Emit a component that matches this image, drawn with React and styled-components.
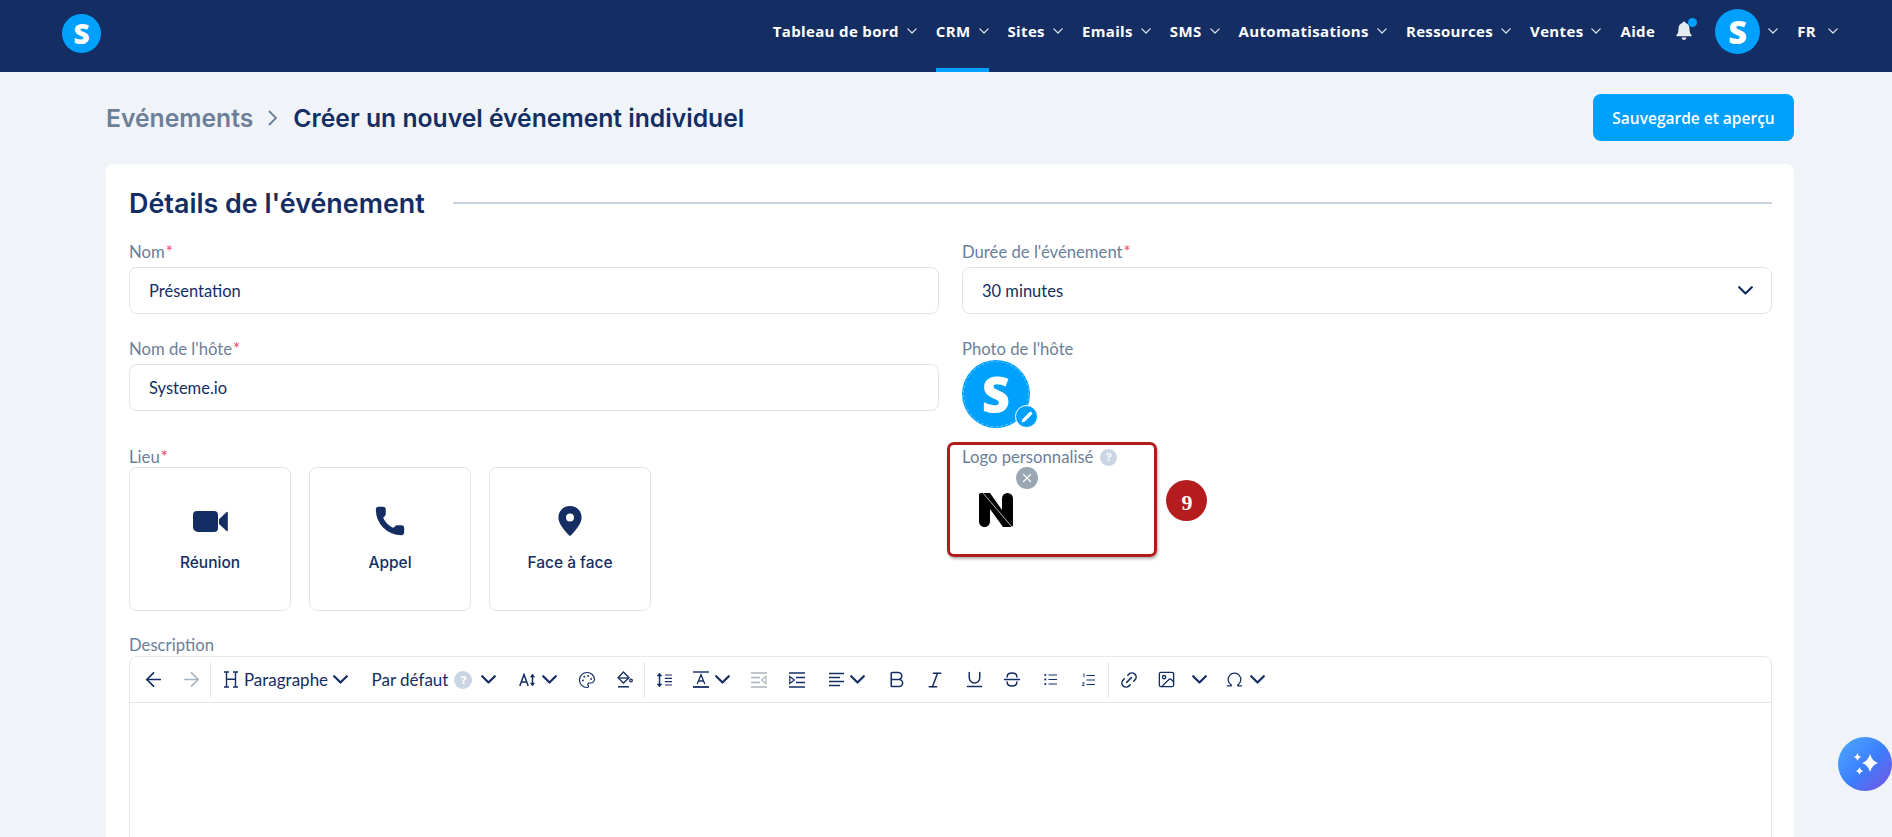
import React from "react";
import styled, { createGlobalStyle } from "styled-components";
import {
  ArrowLeft,
  ArrowRight,
  Bold,
  Image,
  Italic,
  Link2,
  Omega,
  Palette,
  Phone,
  Pencil,
  Underline,
  X,
} from "lucide-react";

const NAVY = "#142e63";
const BLUE = "#00a0ff";

const GlobalStyle = createGlobalStyle`
  html, body {
    margin: 0;
    height: 837px;
    overflow: hidden;
    background: #f0f4f9;
    font-family: "Lato", "Liberation Sans", sans-serif;
  }
  * { box-sizing: border-box; }
`;

const Page = styled.div`
  height: 837px;
  overflow: hidden;
  position: relative;
`;

const Header = styled.header`
  height: 72px;
  background: ${NAVY};
  display: flex;
  align-items: stretch;
  justify-content: space-between;
  padding: 0 54px 0 62px;
`;

const Brand = styled.div`
  display: flex;
  align-items: center;
  padding-bottom: 6px;
`;

const Logo = styled.div`
  width: ${(p) => p.$size}px;
  height: ${(p) => p.$size}px;
  border-radius: 50%;
  background: ${BLUE};
  color: #fff;
  display: flex;
  align-items: center;
  justify-content: center;
  font-family: "Open Sans", sans-serif;
  font-weight: 800;
  font-size: ${(p) => p.$size * 0.72}px;
  line-height: 1;
  flex: none;
`;

const Nav = styled.nav`
  display: flex;
  align-items: stretch;
  gap: 19px;
`;

const NavItem = styled.div`
  position: relative;
  display: flex;
  align-items: center;
  gap: ${(p) => p.$gap ?? 8}px;
  padding-bottom: 10px;
  color: #fff;
  font-family: "Open Sans", sans-serif;
  font-size: 15px;
  font-weight: 700;
  letter-spacing: 0.35px;
  white-space: nowrap;
  ${(p) =>
    p.$active &&
    `&::after {
      content: "";
      position: absolute;
      left: 0;
      right: 0;
      bottom: 0;
      height: 4px;
      background: ${BLUE};
    }`}
`;

const BellWrap = styled.div`
  position: relative;
  width: 20px;
  height: 20px;
  align-self: center;
  margin: 0 2px 10px 0;
  color: #e6ebf1;
`;

const BellDot = styled.span`
  position: absolute;
  top: -3px;
  right: -3px;
  width: 9px;
  height: 9px;
  border-radius: 50%;
  background: ${BLUE};
`;

const Main = styled.main`
  padding: 22px 98px 0 106px;
`;

const TitleBar = styled.div`
  display: flex;
  align-items: center;
  justify-content: space-between;
  height: 47px;
`;

const Crumbs = styled.div`
  display: flex;
  align-items: center;
  gap: 13px;
  font-family: "Inter", sans-serif;
  font-size: 24.700px;
  font-weight: 600;
  color: ${NAVY};
`;

const CrumbLink = styled.span`
  color: #6c7f99;
`;

const PrimaryButton = styled.button`
  width: 201px;
  height: 47px;
  border: 0;
  border-radius: 8px;
  background: ${BLUE};
  color: #fff;
  font-family: "Open Sans", sans-serif;
  font-size: 15.500px;
  font-weight: 600;
`;

const Card = styled.section`
  position: relative;
  margin-top: 23px;
  height: 800px;
  background: #fff;
  border-radius: 8px;
  padding: 20px 22px 0 23px;
`;

const SectionHead = styled.div`
  display: flex;
  align-items: center;
  gap: 28px;
  height: 38px;
`;

const SectionTitle = styled.h2`
  margin: 0;
  font-family: "Inter", sans-serif;
  font-size: 26.900px;
  font-weight: 600;
  color: ${NAVY};
  white-space: nowrap;
`;

const SectionRule = styled.div`
  flex: 1;
  height: 2px;
  background: #c9d4e3;
`;

const FormGrid = styled.div`
  display: grid;
  grid-template-columns: 810px 810px;
  column-gap: 23px;
  row-gap: 25px;
  margin-top: 20px;
`;

const Field = styled.div`
  display: flex;
  flex-direction: column;
  min-width: 0;
  height: ${(p) => (p.$h ? `${p.$h}px` : "auto")};
`;

const Label = styled.label`
  display: flex;
  align-items: center;
  gap: 7px;
  height: 20px;
  margin-bottom: ${(p) => p.$mb ?? 5}px;
  color: #6c7f99;
  font-size: 16.700px;
  white-space: nowrap;
`;

const Star = styled.span`
  color: #f0436b;
  margin-left: -6px;
`;

const Input = styled.div`
  height: 47px;
  display: flex;
  align-items: center;
  justify-content: space-between;
  padding: 0 18px 0 19px;
  border: 1px solid #dfe3e8;
  border-radius: 8px;
  color: ${NAVY};
  font-size: 16.500px;
`;

const AvatarWrap = styled.div`
  position: relative;
  width: 68px;
  height: 68px;
  margin-top: -4px;
  &::after {
    content: "";
    position: absolute;
    inset: 1px;
    border-radius: 50%;
    border: 1px dashed rgba(255, 255, 255, 0.4);
  }
`;

const AvatarBadge = styled.span`
  position: absolute;
  right: -8px;
  bottom: 0;
  width: 23px;
  height: 23px;
  border-radius: 50%;
  border: 1.5px solid #fff;
  background: ${BLUE};
  color: #fff;
  display: flex;
  align-items: center;
  justify-content: center;
  z-index: 1;
`;

const Help = styled.span`
  width: ${(p) => p.$size || 17}px;
  height: ${(p) => p.$size || 17}px;
  margin-right: ${(p) => p.$mr || 0}px;
  border-radius: 50%;
  background: #cbd5e3;
  color: #fff;
  font-family: "Inter", sans-serif;
  font-size: 11px;
  font-weight: 700;
  display: inline-flex;
  align-items: center;
  justify-content: center;
  flex: none;
`;

const LogoField = styled.div`
  position: relative;
  width: 120px;
  height: 60px;
  margin-top: 3px;
`;

const LogoClose = styled.span`
  position: absolute;
  left: 54px;
  top: -3px;
  width: 22px;
  height: 22px;
  border-radius: 50%;
  background: #9aa7b2;
  color: #fff;
  display: flex;
  align-items: center;
  justify-content: center;
`;

const LogoMark = styled.svg`
  position: absolute;
  left: 17px;
  top: 23px;
`;

const LocationRow = styled.div`
  display: flex;
  gap: 18px;
`;

const LocationCard = styled.div`
  width: 162px;
  height: 144px;
  border: 1px solid #e0e4e9;
  border-radius: 8px;
  display: flex;
  flex-direction: column;
  align-items: center;
  padding-top: 37px;
  color: ${NAVY};
  font-family: "Inter", sans-serif;
  font-size: 15.500px;
  font-weight: 500;
`;

const LocationIcon = styled.div`
  height: 32px;
  margin-bottom: 16px;
  display: flex;
  align-items: center;
  justify-content: center;
  color: ${NAVY};
`;

const DescField = styled(Field)`
  margin-top: 24px;
  position: relative;
`;

const Editor = styled.div`
  border: 1.5px solid #e2e8ec;
  border-radius: 8px;
  height: 400px;
  margin-top: -4px;
`;

const Toolbar = styled.div`
  height: 46px;
  border-bottom: 1.5px solid #e2e8ec;
  display: flex;
  align-items: center;
  padding-left: 4px;
  color: ${NAVY};
`;

const ToolButton = styled.div`
  width: ${(p) => p.$w || 38}px;
  height: 36px;
  flex: none;
  display: flex;
  align-items: center;
  justify-content: center;
  gap: ${(p) => p.$gap ?? 6}px;
  color: ${(p) => (p.$muted ? "#a9b5c0" : NAVY)};
  font-size: 17px;
  white-space: nowrap;
`;

const ToolDivider = styled.span`
  width: 1px;
  height: 36px;
  background: #e2e8ec;
  flex: none;
`;

const Fab = styled.div`
  position: absolute;
  left: 1838px;
  top: 737px;
  width: 54px;
  height: 54px;
  border-radius: 50%;
  background: linear-gradient(135deg, #50aaff 0%, #3b7fff 52%, #7b4fdc 100%);
  display: flex;
  align-items: center;
  justify-content: center;
`;

const Highlight = styled.div`
  position: absolute;
  left: 947px;
  top: 442px;
  width: 210px;
  height: 115px;
  border: 3.500px solid #b01c1e;
  border-radius: 7px;
  box-shadow: 1px 2px 3px rgba(0, 0, 0, 0.3);
`;

const StepBadge = styled.div`
  position: absolute;
  left: 1166px;
  top: 480px;
  width: 41px;
  height: 41px;
  border-radius: 50%;
  background: #b41c1e;
  color: #fff;
  font-family: "Liberation Serif", serif;
  font-size: 22px;
  font-weight: 700;
  padding: 5px 0 0 1px;
  display: flex;
  align-items: center;
  justify-content: center;
`;

const Chevron = ({ w = 15, sw = 2.2, color = "currentColor" }) => (
  <svg width={w} height={w * 0.6} viewBox="0 0 15 9" fill="none">
    <path d="M1.200 1.200 7.500 7.500 13.800 1.200" stroke={color} strokeWidth={(sw * 15) / w} strokeLinecap="round" strokeLinejoin="round" />
  </svg>
);

const NavChevron = () => <Chevron w={10} sw={1.2} color="#dfe6ee" />;

const Bell = () => (
  <svg width="20" height="20" viewBox="0 0 20 20" fill="currentColor">
    <path d="M10 0.500a1.600 1.600 0 0 1 1.600 1.600c2.600.7 3.900 2.900 3.900 5.600 0 3.400.7 5 2 6.300.4.4.2 1.200-.5 1.200H3c-.7 0-.9-.8-.5-1.200 1.300-1.300 2-2.900 2-6.300 0-2.700 1.300-4.900 3.900-5.600A1.600 1.600 0 0 1 10 .5z" />
    <path d="M7.600 16.600h4.800a2.400 2.400 0 0 1-4.800 0z" />
  </svg>
);

const Video = () => (
  <svg width="35" height="21" viewBox="0 0 35 21" fill="currentColor">
    <path d="M4 0h17a4 4 0 0 1 4 4v13a4 4 0 0 1-4 4H5a5 5 0 0 1-5-5V4a4 4 0 0 1 4-4z" />
    <path d="M26 8.200 33.600.9c.5-.4 1.200-.1 1.200.5v18.200c0 .6-.7.9-1.200.5L26 13z" />
  </svg>
);

const Pin = () => (
  <svg width="24" height="30" viewBox="0 0 24 30">
    <path
      fill="currentColor"
      fillRule="evenodd"
      d="M12 0c6.600 0 11.600 5 11.600 11.400 0 5.600-5.400 12.400-10.600 17.800a1.400 1.400 0 0 1-2 0C5.800 23.800.4 17 .4 11.400.4 5 5.400 0 12 0zm0 7.600a4 4 0 1 0 0 8 4 4 0 0 0 0-8z"
    />
  </svg>
);

const HeadingIcon = () => (
  <svg width="16" height="17" viewBox="0 0 16 17" fill="none" stroke="currentColor" strokeWidth="1.400">
    <path d="M3.500 1v15M12.500 1v15M3.500 8.200h9M1 1h5M10 1h5M1 16h5M10 16h5" />
  </svg>
);

const FontSizeIcon = () => (
  <svg width="17" height="14" viewBox="0 0 17 14" fill="none" stroke="currentColor" strokeWidth="1.500">
    <path d="M.8 13 5 1.500 9.200 13M2.200 9h5.600" />
    <path d="M13.500 2v10" />
    <path d="M11.500 4 13.500 1l2 3zM11.500 10l2 3 2-3z" fill="currentColor" strokeWidth="0.600" />
  </svg>
);

const FillIcon = () => (
  <svg width="16" height="17" viewBox="0 0 16 17" fill="none" stroke="currentColor" strokeWidth="1.300">
    <path d="M6.500 1 12 6.800 6.500 12 1 6.800z" />
    <path d="M1.500 7h10" />
    <circle cx="14" cy="9.500" r="1.300" />
    <path d="M1 15.800h11" strokeWidth="1.500" />
  </svg>
);

const LineHeightIcon = () => (
  <svg width="16" height="16" viewBox="0 0 16 16" fill="none" stroke="currentColor" strokeWidth="1.500">
    <path d="M3.500 2.500v11" />
    <path d="M1 4l2.500-3L6 4zM1 12l2.500 3L6 12z" fill="currentColor" strokeWidth="0.500" />
    <path d="M9 3h7M9 6.300h7M9 9.700h7M9 13h7" strokeWidth="1.200" />
  </svg>
);

const TextColorIcon = () => (
  <svg width="16" height="17" viewBox="0 0 16 17" fill="none" stroke="currentColor" strokeWidth="1.300">
    <path d="M0 1h16" strokeWidth="1.400" />
    <path d="M4.200 13 8 3.800 11.800 13M5.500 10h5" />
    <path d="M0 16h16" strokeWidth="1.800" />
  </svg>
);

const IndentIcon = ({ flip }) => (
  <svg width="16" height="16" viewBox="0 0 16 16" fill="none" stroke="currentColor" strokeWidth="1.500">
    <path d="M0 1h16M0 15h16" />
    {flip ? (
      <>
        <path d="M0 5.500h9M0 10.500h9" />
        <path d="M15 4.500 10.500 8l4.500 3.500z" strokeWidth="1.200" />
      </>
    ) : (
      <>
        <path d="M7 5.500h9M7 10.500h9" />
        <path d="M.8 4.500 5.300 8 .8 11.500z" strokeWidth="1.200" />
      </>
    )}
  </svg>
);

const AlignIcon = () => (
  <svg width="15" height="15" viewBox="0 0 15 15" fill="none" stroke="currentColor" strokeWidth="1.300">
    <path d="M0 1.500h15M0 5.500h11M0 9.500h15M0 13.500h11" />
  </svg>
);

const ListIcon = () => (
  <svg width="13" height="13" viewBox="0 0 13 13" fill="none" stroke="currentColor" strokeWidth="1.200">
    <path d="M4.500 2h8.500M4.500 6.500h8.500M4.500 11h8.500" />
    <circle cx="1.300" cy="2" r="1.100" fill="currentColor" stroke="none" />
    <circle cx="1.300" cy="6.500" r="1.100" fill="currentColor" stroke="none" />
    <circle cx="1.300" cy="11" r="1.100" fill="currentColor" stroke="none" />
  </svg>
);

const NumberedIcon = () => (
  <svg width="13" height="14" viewBox="0 0 13 14" fill="none" stroke="currentColor" strokeWidth="1.200">
    <path d="M4.500 2.500h8.500M4.500 7h8.500M4.500 11.500h8.500" />
    <path d="M1 1.200h1v3M.3 9.800h2L.5 12.500h2" strokeWidth="0.900" />
  </svg>
);

const StrikeIcon = () => (
  <svg width="16" height="15" viewBox="0 0 16 15" fill="none" stroke="currentColor" strokeWidth="1.500">
    <path d="M3.200 5.500V4.500C3.200 2.300 5 1 8 1s4.800 1.300 4.800 3.500v1" />
    <path d="M3.200 9.500v1C3.200 12.700 5 14 8 14s4.800-1.300 4.800-3.500v-1" />
    <path d="M0 7.500h16" />
  </svg>
);

const Spark = () => (
  <svg width="26" height="26" viewBox="0 0 26 26" fill="#fff">
    <path d="M18 3Q20 10 26 12 20 14 18 21 16 14 10 12 16 10 18 3z" />
    <path d="M5.500 2.300Q6.300 5.200 9.200 6 6.300 6.800 5.500 9.700 4.700 6.800 1.800 6 4.700 5.200 5.500 2.300z" />
    <path d="M7.500 16.300Q8.300 19.200 11.200 20 8.300 20.800 7.500 23.700 6.700 20.800 3.800 20 6.700 19.200 7.500 16.300z" />
  </svg>
);

const NAV = [
  ["Tableau de bord", true],
  ["CRM", true, true],
  ["Sites", true],
  ["Emails", true],
  ["SMS", true],
  ["Automatisations", true],
  ["Ressources", true],
  ["Ventes", true],
  ["Aide", false],
];

const LOCATIONS = [
  ["Réunion", <Video key="v" />],
  ["Appel", <Phone key="p" size={34} fill="currentColor" strokeWidth={0} />],
  ["Face à face", <Pin key="f" />],
];

export default function App() {
  return (
    <Page>
      <GlobalStyle />
      <Header>
        <Brand>
          <Logo $size={39}>S</Logo>
        </Brand>
        <Nav>
          {NAV.map(([label, hasMenu, active]) => (
            <NavItem key={label} $active={active}>
              {label}
              {hasMenu && <NavChevron />}
            </NavItem>
          ))}
          <BellWrap>
            <Bell />
            <BellDot />
          </BellWrap>
          <NavItem>
            <Logo $size={45}>S</Logo>
            <NavChevron />
          </NavItem>
          <NavItem $gap={12}>
            FR
            <NavChevron />
          </NavItem>
        </Nav>
      </Header>

      <Main>
        <TitleBar>
          <Crumbs>
            <CrumbLink>Evénements</CrumbLink>
            <svg width="14" height="18" viewBox="0 0 14 18" fill="none" stroke="#6c7f99" strokeWidth="1.800">
              <path d="M3 2l7 7-7 7" />
            </svg>
            Créer un nouvel événement individuel
          </Crumbs>
          <PrimaryButton>Sauvegarde et aperçu</PrimaryButton>
        </TitleBar>

        <Card>
          <SectionHead>
            <SectionTitle>Détails de l'événement</SectionTitle>
            <SectionRule />
          </SectionHead>

          <FormGrid>
            <Field>
              <Label>
                Nom<Star>*</Star>
              </Label>
              <Input>Présentation</Input>
            </Field>
            <Field>
              <Label>
                Durée de l'événement<Star>*</Star>
              </Label>
              <Input>
                30 minutes
                <Chevron w={15} sw={2.2} />
              </Input>
            </Field>

            <Field>
              <Label>
                Nom de l'hôte<Star>*</Star>
              </Label>
              <Input>Systeme.io</Input>
            </Field>
            <Field $h={83}>
              <Label>Photo de l'hôte</Label>
              <AvatarWrap>
                <Logo $size={68}>S</Logo>
                <AvatarBadge>
                  <Pencil size={12} fill="currentColor" strokeWidth={1.500} />
                </AvatarBadge>
              </AvatarWrap>
            </Field>

            <Field>
              <Label $mb={0}>
                Lieu<Star>*</Star>
              </Label>
              <LocationRow>
                {LOCATIONS.map(([label, icon]) => (
                  <LocationCard key={label}>
                    <LocationIcon>{icon}</LocationIcon>
                    {label}
                  </LocationCard>
                ))}
              </LocationRow>
            </Field>
            <Field>
              <Label $mb={0}>
                Logo personnalisé
                <Help>?</Help>
              </Label>
              <LogoField>
                <LogoClose>
                  <X size={14} strokeWidth={2} />
                </LogoClose>
                <LogoMark width="34" height="34" viewBox="0 0 34 34">
                  <path d="M2 0H11L23 17V5.500a5.500 5.500 0 0 1 11 0V32a2 2 0 0 1-2 2H24L11 16V28.500a5.500 5.500 0 0 1-11 0V2a2 2 0 0 1 2-2z" fill="#000" />
                  <path d="M4 0 33 34" stroke="#fff" strokeWidth="0.700" />
                </LogoMark>
              </LogoField>
            </Field>
          </FormGrid>

          <DescField>
            <Label>Description</Label>
            <Editor>
              <Toolbar>
                <ToolButton><ArrowLeft size={23} strokeWidth={1.800} /></ToolButton>
                <ToolButton $muted><ArrowRight size={23} strokeWidth={1.800} /></ToolButton>
                <ToolDivider />
                <ToolButton $w={149} $gap={5}><HeadingIcon />Paragraphe<Chevron /></ToolButton>
                <ToolButton $w={148} $gap={6}>Par défaut<Help $size={18} $mr={3}>?</Help><Chevron /></ToolButton>
                <ToolButton $w={60}><FontSizeIcon /><Chevron /></ToolButton>
                <ToolButton><Palette size={18} strokeWidth={1.600} /></ToolButton>
                <ToolButton><FillIcon /></ToolButton>
                <ToolDivider />
                <ToolButton><LineHeightIcon /></ToolButton>
                <ToolButton $w={57}><TextColorIcon /><Chevron /></ToolButton>
                <ToolButton $muted><IndentIcon flip /></ToolButton>
                <ToolButton><IndentIcon /></ToolButton>
                <ToolButton $w={61}><AlignIcon /><Chevron /></ToolButton>
                <ToolButton><Bold size={21} strokeWidth={1.800} /></ToolButton>
                <ToolButton $w={40}><Italic size={20} strokeWidth={1.800} /></ToolButton>
                <ToolButton><Underline size={21} strokeWidth={1.700} /></ToolButton>
                <ToolButton><StrikeIcon /></ToolButton>
                <ToolButton><ListIcon /></ToolButton>
                <ToolButton $w={39}><NumberedIcon /></ToolButton>
                <ToolDivider />
                <ToolButton $w={39}><Link2 size={20} strokeWidth={1.800} transform="rotate(-45)" /></ToolButton>
                <ToolButton $w={37}><Image size={19} strokeWidth={1.700} /></ToolButton>
                <ToolButton $w={29}><Chevron /></ToolButton>
                <ToolButton $w={61} $gap={6}><Omega size={19} strokeWidth={1.600} /><Chevron /></ToolButton>
              </Toolbar>
            </Editor>
          </DescField>
        </Card>
      </Main>

      <Highlight />
      <StepBadge>9</StepBadge>
      <Fab>
        <Spark />
      </Fab>
    </Page>
  );
}
